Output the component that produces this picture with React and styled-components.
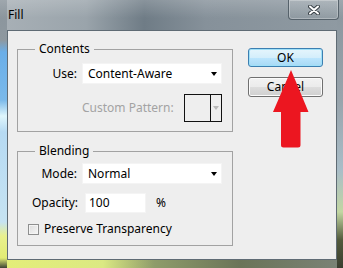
import React from 'react';
import styled, { createGlobalStyle } from 'styled-components';

const GlobalStyle = createGlobalStyle`
  html, body {
    margin: 0;
    padding: 0;
    background: #ffffff;
  }
  body {
    font-family: "Noto Sans", "Liberation Sans", sans-serif;
    font-size: 12px;
    line-height: 14px;
    color: #000;
  }
`;

const Frame = styled.div`
  position: relative;
  width: 343px;
  height: 268px;
  overflow: hidden;
  display: flex;
  flex-direction: column;
  background:
    linear-gradient(to bottom, #8a949c 0, #8e989f 40px, #6aaee8 52px, #7ab9ea 100px, #dff6fc 116px, #b6daf3 132px, #c6e3f2 222px, #e9f18e 236px, #e2ec74 258px, #3c4234 268px) left top / 7px 100% no-repeat,
    linear-gradient(to bottom, #8a959d 0, #98a4ac 100px, #a9bdc8 170px, #c2d6a2 212px, #525a3c 240px, #3a3e30 268px) right top / 6px 100% no-repeat,
    linear-gradient(to right, #e4ee78 0, #dbe983 30%, #8e9c6a 45%, #6a7458 70%, #7b8377 100%) left bottom / 100% 8px no-repeat,
    linear-gradient(to right, #a8b0b6 0, #9aa4ab 25%, #6f7c86 42%, #86919a 60%, #8f9aa2 100%);
`;

const TitleBar = styled.div`
  height: 30px;
  flex: none;
  display: flex;
  align-items: flex-start;
  justify-content: space-between;
  background: linear-gradient(to bottom, rgba(255,255,255,0.18), rgba(255,255,255,0) 60%);
`;

const Title = styled.span`
  margin: 8px 0 0 8px;
  font-size: 12px;
  line-height: 14px;
  color: #000;
`;

const CloseButton = styled.div`
  width: 51px;
  height: 20px;
  margin-right: 4px;
  box-sizing: border-box;
  border: 1px solid #56626b;
  border-top: none;
  border-radius: 0 0 4px 4px;
  box-shadow: inset 0 0 0 1px rgba(255,255,255,0.28);
  background: linear-gradient(to bottom, rgba(255,255,255,0.12), rgba(255,255,255,0.02));
  display: flex;
  align-items: center;
  justify-content: center;
`;

const Client = styled.div`
  flex: none;
  height: 230px;
  margin: 0 6px 0 7px;
  box-sizing: border-box;
  border: 1px solid #5f6b74;
  background: #eeeeee;
  display: flex;
  padding: 17px 13px 0 9px;
`;

const LeftColumn = styled.div`
  width: 216px;
  flex: none;
  margin-top: 1px;
  display: flex;
  flex-direction: column;
  gap: 19px;
`;

const Group = styled.div`
  box-sizing: border-box;
  border: 1px solid #a2a2a2;
  padding: 0 10px ${p => p.$bottom}px 0;
  display: flex;
  flex-direction: column;
`;

const Caption = styled.div`
  width: fit-content;
  margin: -8px 0 0 17px;
  padding: 0 4px;
  line-height: 14px;
  background: #eeeeee;
`;

const Row = styled.div`
  display: flex;
  align-items: center;
  margin-top: ${p => p.$top}px;
`;

const Label = styled.span`
  width: ${p => p.$w || 59}px;
  flex: none;
  text-align: right;
  margin-right: ${p => p.$gap || 5}px;
  white-space: nowrap;
`;

const DisabledText = styled.span`
  white-space: nowrap;
  color: #a3a3a3;
`;

const Select = styled.div`
  flex: 1;
  height: 21px;
  box-sizing: border-box;
  background: #ffffff;
  border: 1px solid #f4f4f4;
  display: flex;
  align-items: center;
  justify-content: space-between;
  padding: 0 4px 0 5px;
`;

const Caret = styled.span`
  width: 0;
  height: 0;
  border-left: 3.5px solid transparent;
  border-right: 3.5px solid transparent;
  border-top: 4px solid ${p => p.$color || '#000'};
`;

const PatternBox = styled.div`
  width: 38px;
  height: 28px;
  margin-left: auto;
  box-sizing: border-box;
  border: 1.5px solid #111;
  display: flex;
`;

const PatternSwatch = styled.div`
  width: 25px;
  border-right: 1.5px solid #111;
`;

const PatternDrop = styled.div`
  flex: 1;
  display: flex;
  align-items: center;
  justify-content: center;
`;

const TextInput = styled.div`
  width: 61px;
  height: 20px;
  box-sizing: border-box;
  background: #ffffff;
  border: 1px solid #f4f4f4;
  padding-left: 3px;
  display: flex;
  align-items: center;
`;

const Unit = styled.span`
  margin-left: 10px;
`;

const CheckRow = styled.label`
  display: flex;
  align-items: center;
  margin: 9px 0 0 10px;
`;

const CheckBox = styled.span`
  width: 11px;
  height: 11px;
  box-sizing: border-box;
  border: 1px solid #8e8f8f;
  background: linear-gradient(135deg, #dcdcdc, #f6f6f6);
  box-shadow: inset 0 0 0 1px #f4f4f4;
  margin-right: 5px;
`;

const ButtonColumn = styled.div`
  margin-left: 15px;
  width: 75px;
  display: flex;
  flex-direction: column;
  gap: 10px;
`;

const Button = styled.div`
  height: ${p => (p.$primary ? 19 : 20)}px;
  box-sizing: border-box;
  border: 1px solid ${p => (p.$primary ? '#3c7fb1' : '#707070')};
  border-radius: 3px;
  box-shadow: inset 0 0 0 1px ${p => (p.$primary ? '#9fe0f8' : '#fbfbfb')};
  background: ${p => (p.$primary
    ? 'linear-gradient(to bottom, #e5f5fc 0, #d4eefb 50%, #bde6fd 51%, #a7d9f5 100%)'
    : 'linear-gradient(to bottom, #f2f2f2 0, #ebebeb 50%, #dddddd 51%, #cfcfcf 100%)')};
  display: flex;
  align-items: center;
  justify-content: center;
  line-height: 14px;
`;

const Arrow = styled.svg`
  position: absolute;
  left: 272px;
  top: 69px;
`;

const CloseGlyph = () => (
  <svg width="12" height="10" viewBox="0 0 12 10">
    <path d="M2 1.5 L10 8.5 M10 1.5 L2 8.5" stroke="#3a4248" strokeWidth="4" strokeLinecap="round" />
    <path d="M2 1.5 L10 8.5 M10 1.5 L2 8.5" stroke="#ffffff" strokeWidth="2" strokeLinecap="round" />
  </svg>
);

export default function App() {
  return (
    <>
      <GlobalStyle />
      <Frame>
        <TitleBar>
          <Title>Fill</Title>
          <CloseButton><CloseGlyph /></CloseButton>
        </TitleBar>
        <Client>
          <LeftColumn>
            <Group $bottom={9}>
              <Caption>Contents</Caption>
              <Row $top={7}>
                <Label>Use:</Label>
                <Select>Content-Aware<Caret /></Select>
              </Row>
              <Row $top={10}>
                <Label />
                <DisabledText>Custom Pattern:</DisabledText>
                <PatternBox>
                  <PatternSwatch />
                  <PatternDrop><Caret $color="#b8b8b8" /></PatternDrop>
                </PatternBox>
              </Row>
            </Group>
            <Group $bottom={9}>
              <Caption>Blending</Caption>
              <Row $top={5}>
                <Label>Mode:</Label>
                <Select>Normal<Caret /></Select>
              </Row>
              <Row $top={9}>
                <Label $w={60} $gap={7}>Opacity:</Label>
                <TextInput>100</TextInput>
                <Unit>%</Unit>
              </Row>
              <CheckRow>
                <CheckBox />
                Preserve Transparency
              </CheckRow>
            </Group>
          </LeftColumn>
          <ButtonColumn>
            <Button $primary>OK</Button>
            <Button>Cancel</Button>
          </ButtonColumn>
        </Client>
        <Arrow width="38" height="80" viewBox="0 0 38 80">
          <path
            d="M19 1 Q27 20 36.5 43 L28.5 43 L28.5 76 Q28.5 78.5 26 78.5 L11.5 78.5 Q9 78.5 9 76 L9 43 L1 43 Q11 20 19 1 Z"
            fill="#ec1620"
          />
        </Arrow>
      </Frame>
    </>
  );
}
